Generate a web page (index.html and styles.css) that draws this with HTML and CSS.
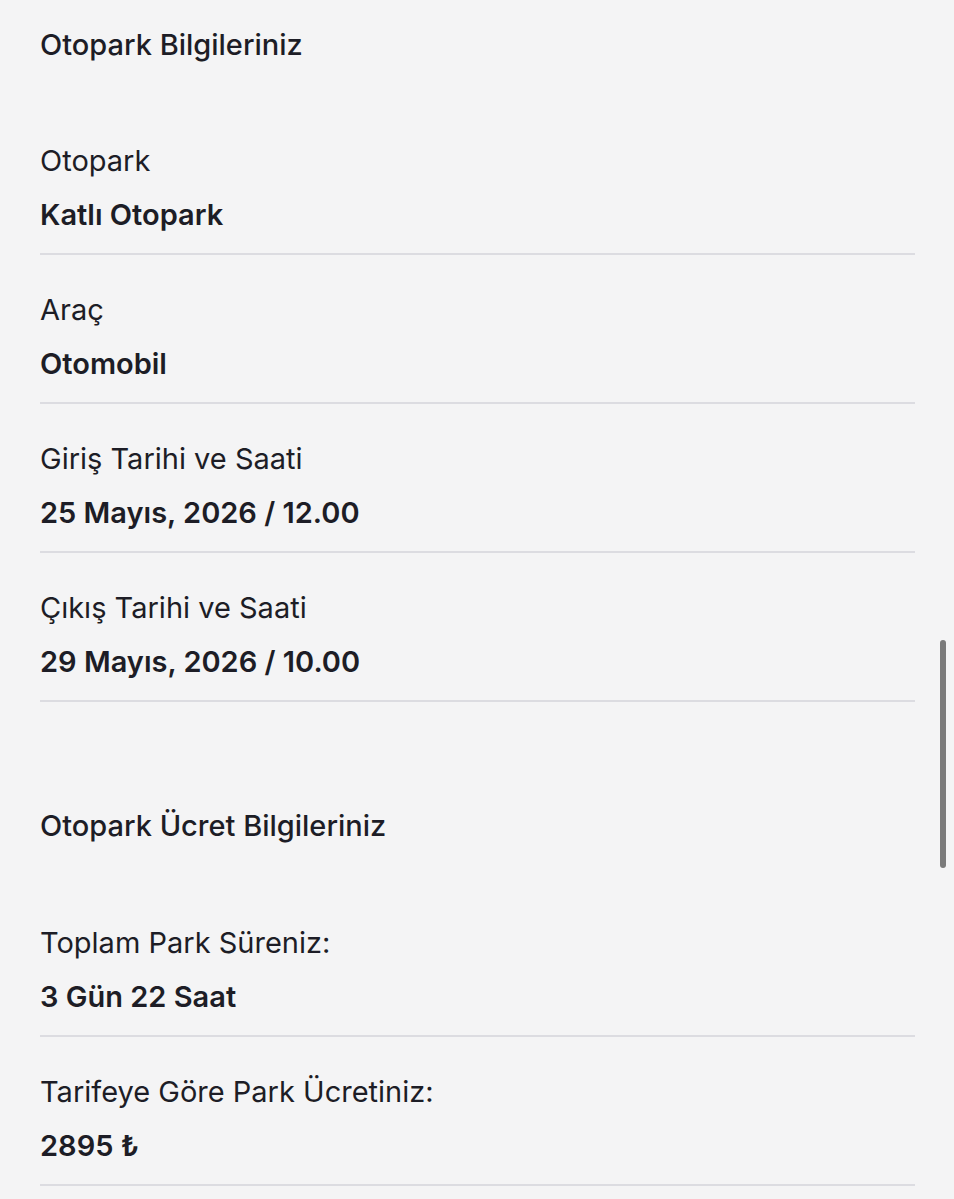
FILE: index.html
```html
<!DOCTYPE html>
<html lang="tr">
<head>
    <meta charset="UTF-8">
    <meta name="viewport" content="width=device-width, initial-scale=1.0">
    <title>Otopark Bilgileriniz</title>
    <link rel="stylesheet" href="styles.css">
</head>
<body>
    <div class="page">
        <!-- Parking info -->
        <section class="info-section">
            <h2 class="section-title">Otopark Bilgileriniz</h2>
            <div class="info-row">
                <div class="info-label">Otopark</div>
                <div class="info-value">Katlı Otopark</div>
            </div>
            <div class="info-row">
                <div class="info-label">Araç</div>
                <div class="info-value">Otomobil</div>
            </div>
            <div class="info-row">
                <div class="info-label">Giriş Tarihi ve Saati</div>
                <div class="info-value">25 Mayıs, 2026 / 12.00</div>
            </div>
            <div class="info-row">
                <div class="info-label">Çıkış Tarihi ve Saati</div>
                <div class="info-value">29 Mayıs, 2026 / 10.00</div>
            </div>
        </section>

        <!-- Fee info -->
        <section class="info-section second">
            <h2 class="section-title">Otopark Ücret Bilgileriniz</h2>
            <div class="info-row">
                <div class="info-label">Toplam Park Süreniz:</div>
                <div class="info-value">3 Gün 22 Saat</div>
            </div>
            <div class="info-row">
                <div class="info-label">Tarifeye Göre Park Ücretiniz:</div>
                <div class="info-value">2895 ₺</div>
            </div>
        </section>
    </div>

    <div class="scroll-thumb"></div>
</body>
</html>
```

FILE: styles.css
```css
body {
    margin: 0;
    background-color: #f4f4f5;
    color: #1d1d26;
    font-family: Inter, 'Noto Sans', sans-serif;
    overflow: hidden;
}

.page {
    padding: 25px 39px 0 40px;
}

/* Section headers */
.section-title {
    margin: 0 0 41px;
    font-size: 29px;
    line-height: 40px;
    font-weight: 500;
}

.info-section.second {
    margin-top: 104px;
}

.info-section.second .section-title {
    margin-bottom: 42px;
}

/* Label / value rows */
.info-row {
    padding: 35px 0 18px;
    border-bottom: 2px solid #dcdce1;
}

.info-label {
    font-size: 29px;
    line-height: 40px;
    font-weight: 400;
}

.info-value {
    margin-top: 14px;
    font-size: 29px;
    line-height: 40px;
    font-weight: 600;
}

/* Overlay scrollbar */
.scroll-thumb {
    position: fixed;
    top: 640px;
    left: 940px;
    width: 6px;
    height: 228px;
    border-radius: 3px;
    background-color: #7b7b7b;
}
```
